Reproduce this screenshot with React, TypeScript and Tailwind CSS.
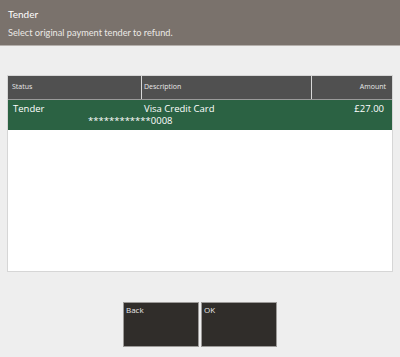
import React from "react";

export default function App() {
  return (
    <div className="w-[400px] h-[357px] bg-[#eeeeee] flex flex-col" style={{ fontFamily: "'Open Sans', 'Noto Sans', sans-serif" }}>
      <div className="h-[46px] bg-[#7a726c] border-b border-[#b5b0ac] px-[8px] pt-[7px] flex flex-col text-white" style={{ fontFamily: "Lato, 'Open Sans', sans-serif" }}>
        <div className="text-[10px] leading-[14px]">Tender</div>
        <div className="text-[9.2px] leading-[13px] mt-[5px] text-[#ece9e6]">Select original payment tender to refund.</div>
      </div>
      <div className="mx-[7px] mt-[29px] h-[197px] bg-white border border-[#d6d6d6] flex flex-col">
        <div className="h-[24px] bg-[#505050] border-b border-[#9a9a9a] flex text-[7px] text-[#e8e8e8]">
          <div className="w-[134px] border-r border-[#d8d8d8] flex items-center pl-[4px]">Status</div>
          <div className="w-[170px] border-r border-[#d8d8d8] flex items-center pl-[2px]">Description</div>
          <div className="flex-1 flex items-center justify-end pr-[6px]">Amount</div>
        </div>
        <div className="h-[30px] bg-[#2b6243] flex text-[9.5px] leading-[12px] text-white">
          <div className="w-[135px] pl-[5px] pt-[3px]">Tender</div>
          <div className="w-[170px] pt-[3px]">
            <div className="pl-[1px]">Visa Credit Card</div>
            <div className="ml-[-55px]">************0008</div>
          </div>
          <div className="flex-1 flex justify-end pr-[8px] pt-[3px]">£27.00</div>
        </div>
      </div>
      <div className="flex justify-center gap-[2px] mt-[30px]">
        <div className="w-[76px] h-[45px] bg-[#302d2a] border border-[#9c9a98] text-[8px] text-[#e8e8e8] px-[2px] pt-[1px] leading-[11px]">Back</div>
        <div className="w-[76px] h-[45px] bg-[#302d2a] border border-[#9c9a98] text-[8px] text-[#e8e8e8] px-[2px] pt-[1px] leading-[11px]">OK</div>
      </div>
    </div>
  );
}
